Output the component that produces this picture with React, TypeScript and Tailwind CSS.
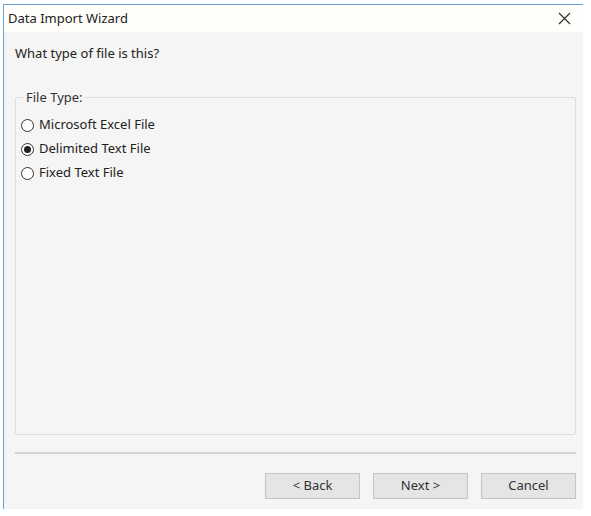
import React from "react";

function Radio({ checked, label }: { checked?: boolean; label: string }) {
  return (
    <div className="flex items-center h-[24px]">
      <span className="w-[13px] h-[13px] rounded-full border border-[#333] bg-white flex items-center justify-center ml-[5px]">
        {checked && <span className="w-[7px] h-[7px] rounded-full bg-[#222]" />}
      </span>
      <span className="ml-[5px] text-[13px] text-[#222]">{label}</span>
    </div>
  );
}

function Btn({ label }: { label: string }) {
  return (
    <div className="w-[95px] h-[26px] border border-[#c4c4c4] bg-[#e5e5e5] flex items-center justify-center text-[13px] text-[#333]">
      {label}
    </div>
  );
}

export default function App() {
  return (
    <div
      className="w-[591px] h-[516px] bg-white pt-[4px] pl-[3px]"
      style={{ fontFamily: '"Noto Sans", "Open Sans", sans-serif' }}
    >
      <div className="w-[580px] h-[505px] border-l border-t border-[#6a9fd0] flex flex-col">
        <div className="h-[27px] bg-[#fffefa] flex items-center justify-between pl-[4px] pr-[12px]">
          <span className="text-[13px] text-[#222]">Data Import Wizard</span>
          <svg width="13" height="13" viewBox="0 0 13 13">
            <path d="M1 1 L12 12 M12 1 L1 12" stroke="#333" strokeWidth="1.2" />
          </svg>
        </div>
        <div className="flex-1 bg-[#f5f5f5] flex flex-col pl-[11px] pr-[7px]">
          <div className="mt-[12px] text-[13px] text-[#222] leading-[18px]">What type of file is this?</div>
          <div className="relative mt-[35px] h-[338px] border border-[#dcdcdc] rounded-[2px]">
            <span className="absolute left-[8px] top-[-9px] bg-[#f5f5f5] px-[2px] text-[13px] leading-[16px] text-[#333]">
              File Type:
            </span>
            <div className="pt-[15px]">
              <Radio label="Microsoft Excel File" />
              <Radio checked label="Delimited Text File" />
              <Radio label="Fixed Text File" />
            </div>
          </div>
          <div className="mt-[17px] h-[2px] bg-[#d4d4d4]" />
          <div className="mt-[19px] flex justify-end gap-[13px]">
            <Btn label="< Back" />
            <Btn label="Next >" />
            <Btn label="Cancel" />
          </div>
        </div>
      </div>
    </div>
  );
}
